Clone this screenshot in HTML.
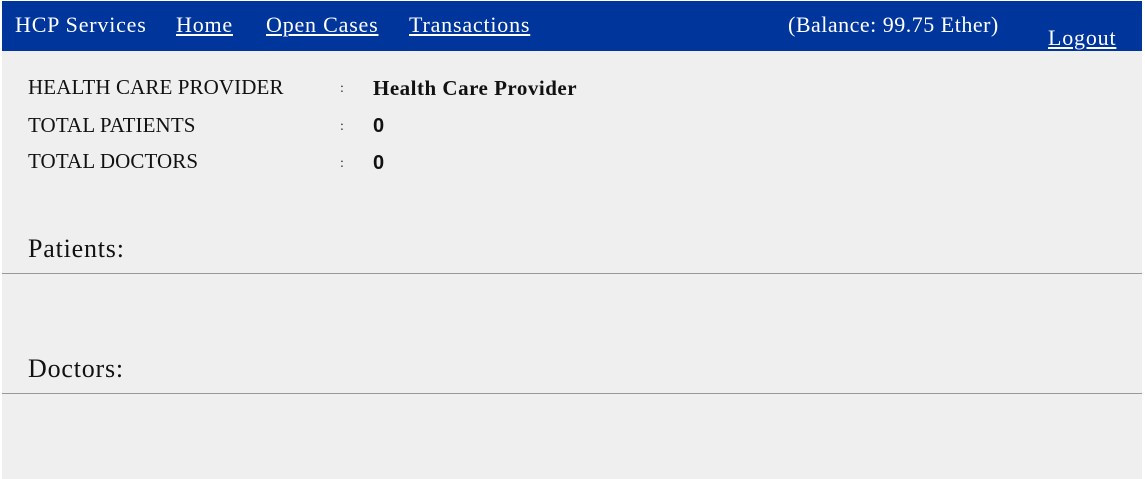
<!DOCTYPE html>
<html><head><style>
html,body{margin:0;padding:0;background:#fff;}
body{width:1145px;height:479px;position:relative;overflow:hidden;font-family:"Liberation Serif","DejaVu Serif",serif;}
.wrap{position:absolute;left:2px;top:1px;width:1140px;height:478px;background:#efefef;}
.nav{position:absolute;left:0;top:0;width:1140px;height:50px;background:#00359b;color:#fff;font-size:22px;letter-spacing:0.8px;}
.nav span{position:absolute;top:11px;white-space:nowrap;}
.nav u{text-decoration:underline;}
.t{position:absolute;font-size:21px;color:#111;white-space:nowrap;letter-spacing:0.1px;}
.c{position:absolute;font-size:14px;color:#333;left:338px;}
.v{position:absolute;left:371px;font-size:20px;font-weight:bold;color:#111;font-family:"Liberation Sans",sans-serif;}
.h{position:absolute;left:26px;font-size:26px;color:#111;letter-spacing:0.8px;}
.line{position:absolute;left:0;width:1140px;height:1px;background:#999;}
</style></head><body>
<div class="wrap">
<div class="nav">
<span style="left:13px">HCP Services</span>
<span style="left:174px"><u>Home</u></span>
<span style="left:264px"><u>Open Cases</u></span>
<span style="left:407px"><u>Transactions</u></span>
<span style="left:786px;letter-spacing:0.5px">(Balance: 99.75 Ether)</span>
<span style="left:1046px;top:24px"><u>Logout</u></span>
</div>
<div class="t" style="left:26px;top:74px">HEALTH CARE PROVIDER</div>
<div class="c" style="top:80px">:</div>
<div class="v" style="top:75px;font-family:'Liberation Serif',serif;font-size:21px;letter-spacing:0.5px">Health Care Provider</div>
<div class="t" style="left:26px;top:112px">TOTAL PATIENTS</div>
<div class="c" style="top:118px">:</div>
<div class="v" style="top:114px">0</div>
<div class="t" style="left:26px;top:148px">TOTAL DOCTORS</div>
<div class="c" style="top:155px">:</div>
<div class="v" style="top:151px">0</div>
<div class="h" style="top:233px">Patients:</div>
<div class="line" style="top:272px"></div>
<div class="h" style="top:353px">Doctors:</div>
<div class="line" style="top:392px"></div>
</div>
</body></html>
